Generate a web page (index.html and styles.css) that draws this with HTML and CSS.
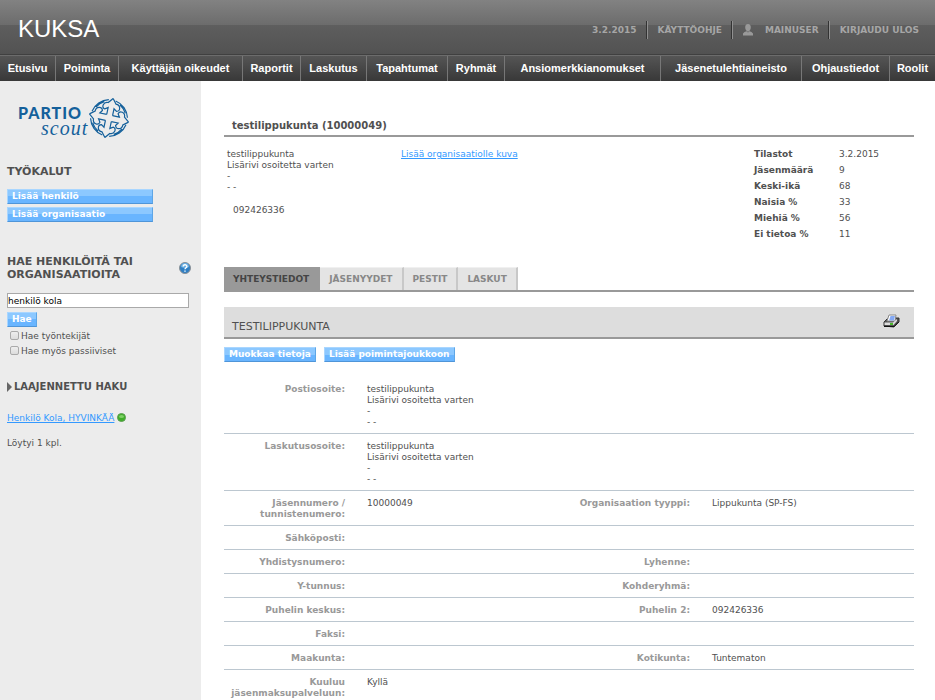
FILE: index.html
```
<!DOCTYPE html>
<html lang="fi">
<head>
    <meta charset="UTF-8">
    <title>KUKSA</title>
    <link rel="stylesheet" href="styles.css">
</head>
<body>
<header class="header">
    <div class="brand">KUKSA</div>
    <ul class="user-menu">
        <li>3.2.2015</li>
        <li><a href="#">KÄYTTÖOHJE</a></li>
        <li>
            <svg class="user-icon" width="10" height="12" viewBox="0 0 10 12">
                <path d="M5 0C3 0 2.200 1.400 2.200 3.200C2.200 5 3 6.200 3.600 6.800V7.500H6.400V6.800C7 6.200 7.800 5 7.800 3.200C7.800 1.400 7 0 5 0Z" fill="#999"/>
                <path d="M0 11.500V9.500L1.500 8L3.500 7.200L5 8.500L6.500 7.200L8.500 8L10 9.500V11.500Z" fill="#999"/>
            </svg>
            <a href="#">MAINUSER</a>
        </li>
        <li><a href="#">KIRJAUDU ULOS</a></li>
    </ul>
</header>

<nav class="nav">
    <a href="#">Etusivu</a>
    <a href="#">Poiminta</a>
    <a href="#">Käyttäjän oikeudet</a>
    <a href="#">Raportit</a>
    <a href="#">Laskutus</a>
    <a href="#">Tapahtumat</a>
    <a href="#">Ryhmät</a>
    <a href="#">Ansiomerkkianomukset</a>
    <a href="#">Jäsenetulehtiaineisto</a>
    <a href="#">Ohjaustiedot</a>
    <a href="#">Roolit</a>
</nav>

<div class="page">
    <aside class="sidebar">
        <svg class="logo" width="112" height="44" viewBox="0 0 112 44">
            <text class="logo-partio" x="0" y="22">PARTIO</text>
            <text class="logo-scout" x="23" y="38">scout</text>
            <g transform="translate(91 21) rotate(12)" fill="none" stroke="#14609b" stroke-width="1.200">
                <g id="arm">
                    <path d="M0 -20L-4 -15C-9 -15 -10 -9 -6 -8L-3 -10L-3 -3M0 -20L4 -15C9 -15 10 -9 6 -8L3 -10L3 -3"/>
                    <path d="M3 -18A19 19 0 0 1 18 -4M8 -15A17 17 0 0 1 15 -8"/>
                </g>
                <use href="#arm" transform="rotate(90)"/>
                <use href="#arm" transform="rotate(180)"/>
                <use href="#arm" transform="rotate(270)"/>
            </g>
        </svg>

        <h2 class="side-title">TYÖKALUT</h2>
        <div class="tools">
            <button class="btn">Lisää henkilö</button>
            <button class="btn">Lisää organisaatio</button>
        </div>

        <form class="search">
            <div class="search-head">
                <h2 class="side-title"><label for="search">HAE HENKILÖITÄ TAI ORGANISAATIOITA</label></h2>
                <svg width="12" height="12" viewBox="0 0 12 12">
                    <circle cx="6" cy="6" r="5.500" fill="#2f7fc4" stroke="#8a9096"/>
                    <path d="M2 5A4 4 0 0 1 10 5Q6 7 2 5Z" fill="#6bb0e4"/>
                    <path d="M4.200 4.600C4.200 2.200 7.900 2.300 7.900 4.400C7.900 5.800 6 5.800 6 7.300M6 8.400V9.700" fill="none" stroke="#fff" stroke-width="1.400"/>
                </svg>
            </div>
            <input class="search-input" id="search" type="text" value="henkilö kola">
            <button class="btn" type="button">Hae</button>
            <label class="check"><input type="checkbox">Hae työntekijät</label>
            <label class="check"><input type="checkbox">Hae myös passiiviset</label>
        </form>

        <h3 class="advanced">
            <svg width="5" height="10" viewBox="0 0 5 10"><path d="M0 0L5 5L0 10Z" fill="#666"/></svg>
            LAAJENNETTU HAKU
        </h3>
        <p class="result">
            <a class="link" href="#">Henkilö Kola, HYVINKÄÄ</a>
            <svg width="9" height="9" viewBox="0 0 9 9">
                <circle cx="4.500" cy="4.500" r="4" fill="#3fae29" stroke="#5c9c50"/>
                <ellipse cx="4.500" cy="3.500" rx="2.500" ry="1.500" fill="#7fd066"/>
            </svg>
        </p>
        <p class="count">Löytyi 1 kpl.</p>
    </aside>

    <main class="main">
        <h1 class="title">testilippukunta (10000049)</h1>

        <section class="summary">
            <div class="address">
                testilippukunta<br>
                Lisärivi osoitetta varten<br>
                -<br>
                - -
                <p class="phone">092426336</p>
            </div>
            <div class="picture"><a class="link" href="#">Lisää organisaatiolle kuva</a></div>
            <table class="stats">
                <tr><th>Tilastot</th><td>3.2.2015</td></tr>
                <tr><th>Jäsenmäärä</th><td>9</td></tr>
                <tr><th>Keski-ikä</th><td>68</td></tr>
                <tr><th>Naisia %</th><td>33</td></tr>
                <tr><th>Miehiä %</th><td>56</td></tr>
                <tr><th>Ei tietoa %</th><td>11</td></tr>
            </table>
        </section>

        <div class="tabs">
            <a class="tab active" href="#">YHTEYSTIEDOT</a>
            <a class="tab" href="#">JÄSENYYDET</a>
            <a class="tab" href="#">PESTIT</a>
            <a class="tab" href="#">LASKUT</a>
        </div>

        <div class="section-head">
            <h2>TESTILIPPUKUNTA</h2>
            <svg width="17" height="15" viewBox="0 0 17 15">
                <path d="M1 8L4 5L12 4L16 4V8L11 13L1 12Z" fill="#555" stroke="#333"/>
                <path d="M4 7L6 1H13L12 7Z" fill="#fff" stroke="#888"/>
                <path d="M6 6.500L7.500 2H12L11 6.500Z" fill="#84a9f3"/>
                <path d="M1.500 8.500H10L14 5V7L10.500 11H1.500Z" fill="#ddd"/>
                <path d="M7 9H10V11H7Z" fill="#4cb82e"/>
                <path d="M1 12.500H11L15.500 8" fill="none" stroke="#111"/>
            </svg>
        </div>

        <div class="actions">
            <button class="btn">Muokkaa tietoja</button>
            <button class="btn">Lisää poimintajoukkoon</button>
        </div>

        <table class="details">
            <colgroup>
                <col class="col-label"><col class="col-value"><col class="col-label"><col class="col-value">
            </colgroup>
            <tr>
                <th>Postiosoite:</th>
                <td colspan="3">testilippukunta<br>Lisärivi osoitetta varten<br>-<br>- -</td>
            </tr>
            <tr>
                <th>Laskutusosoite:</th>
                <td colspan="3">testilippukunta<br>Lisärivi osoitetta varten<br>-<br>- -</td>
            </tr>
            <tr>
                <th>Jäsennumero / tunnistenumero:</th><td>10000049</td>
                <th>Organisaation tyyppi:</th><td>Lippukunta (SP-FS)</td>
            </tr>
            <tr><th>Sähköposti:</th><td colspan="3"></td></tr>
            <tr><th>Yhdistysnumero:</th><td></td><th>Lyhenne:</th><td></td></tr>
            <tr><th>Y-tunnus:</th><td></td><th>Kohderyhmä:</th><td></td></tr>
            <tr><th>Puhelin keskus:</th><td></td><th>Puhelin 2:</th><td>092426336</td></tr>
            <tr><th>Faksi:</th><td colspan="3"></td></tr>
            <tr><th>Maakunta:</th><td></td><th>Kotikunta:</th><td>Tuntematon</td></tr>
            <tr><th>Kuuluu jäsenmaksupalveluun:</th><td colspan="3">Kyllä</td></tr>
        </table>
    </main>
</div>
</body>
</html>
```
FILE: styles.css
```
* {
    box-sizing: border-box;
}

body {
    display: flex;
    flex-direction: column;
    height: 100vh;
    margin: 0;
    overflow: hidden;
    font: 9px/11px Verdana, "DejaVu Sans", sans-serif;
    color: #505050;
    background-color: #fff;
}

h1, h2, h3, p, ul {
    margin: 0;
    padding: 0;
}

/* header */
.header {
    flex: none;
    display: flex;
    justify-content: space-between;
    height: 55px;
    padding: 0 16px 0 18px;
    border-bottom: 1px solid #404040;
    background: linear-gradient(#828282, #6c6c6c 25px, #5e5e5e 25px, #525252);
}

.brand {
    padding-top: 15px;
    font: 24px/28px Arial, "Liberation Sans", sans-serif;
    color: #fff;
}

.user-menu {
    display: flex;
    padding-top: 21px;
    list-style: none;
    font-weight: bold;
    line-height: 18px;
    color: #a6a6a6;
}

.user-menu li {
    display: flex;
    align-items: center;
    height: 18px;
    padding: 0 10px;
    border-left: 1px solid #909090;
    box-shadow: -1px 0 #333;
}

.user-menu li:first-child {
    border: none;
    box-shadow: none;
}

.user-menu li:last-child {
    padding-right: 0;
}

.user-menu a {
    color: inherit;
    text-decoration: none;
}

.user-icon {
    margin-right: 12px;
}

.nav {
    flex: none;
    display: grid;
    grid-template-columns: 55fr 63fr 124fr 58fr 66fr 81fr 57fr 156fr 141fr 88fr 46fr;
    height: 26px;
    border-top: 1px solid #6c6c6c;
    background: linear-gradient(#555, #383838);
}

.nav a {
    border-left: 1px solid #777;
    font: bold 11px/25px Arial, "Liberation Sans", sans-serif;
    text-align: center;
    white-space: nowrap;
    color: #fff;
    text-decoration: none;
}

.nav a:first-child {
    border-left: none;
}

.page {
    flex: 1;
    display: flex;
    min-height: 0;
}

/* sidebar */
.sidebar {
    flex: none;
    width: 201px;
    padding: 16px 10px 0 7px;
    background-color: #ececec;
}

.logo {
    display: block;
    margin: 0 0 24px 11px;
}

.logo-partio {
    font: 900 16px Lato, sans-serif;
    letter-spacing: 1px;
    fill: #14609b;
}

.logo-scout {
    font: italic 20px "Liberation Serif", serif;
    letter-spacing: 1px;
    fill: #14609b;
}

.side-title {
    font-size: 11px;
    line-height: 13px;
}

.btn {
    height: 15px;
    padding: 0 4px;
    border: 1px solid;
    border-color: #a9d6ff #5ea6e6 #4f95d8 #a9d6ff;
    background: linear-gradient(#8cc8ff 50%, #69b5ff 50%);
    font: bold 9px/13px Verdana, "DejaVu Sans", sans-serif;
    color: #fff;
    text-align: left;
    white-space: nowrap;
    cursor: pointer;
}

.tools {
    display: flex;
    flex-direction: column;
    gap: 3px;
    width: 146px;
    margin: 11px 0 33px;
}

.search-head {
    display: flex;
    align-items: center;
    justify-content: space-between;
    margin-bottom: 12px;
}

.search-head .side-title {
    width: 150px;
}

.search-input {
    display: block;
    width: 182px;
    height: 15px;
    margin-bottom: 4px;
    padding: 0;
    border: 1px solid #a9a9a9;
    border-radius: 0;
    background-color: #fff;
    font: 9px/13px Verdana, "DejaVu Sans", sans-serif;
    color: #000;
}

.search .btn {
    display: block;
    margin-bottom: 2px;
}

.check {
    display: flex;
    align-items: center;
    gap: 2px;
    height: 15px;
    padding-left: 3px;
}

.check input {
    appearance: none;
    width: 9px;
    height: 9px;
    margin: 0 0 2px;
    border: 1px solid #aaa;
    border-radius: 2px;
    background: linear-gradient(#eee, #ddd);
}

.advanced {
    display: flex;
    align-items: center;
    gap: 2px;
    margin: 21px 0 20px;
    font-size: 10px;
    line-height: 13px;
}

.link {
    color: #3399ff;
}

.result {
    display: flex;
    gap: 3px;
    margin-bottom: 14px;
}

/* main */
.main {
    flex: 1;
    min-width: 0;
    padding: 37px 21px 0 23px;
}

.title {
    padding: 0 8px 2px;
    border-bottom: 2px solid #999;
    font-size: 10px;
    line-height: 15px;
}

.summary {
    display: flex;
    height: 130px;
    padding-top: 9px;
}

.address {
    width: 177px;
    padding: 3px 3px 0;
}

.phone {
    padding: 12px 6px 0;
}

.picture {
    flex: 1;
    padding-top: 3px;
}

.stats {
    width: 160px;
    height: 96px;
    border-spacing: 0;
}

.stats th {
    width: 85px;
    height: 16px;
    padding: 0;
    text-align: left;
}

.stats td {
    padding: 0;
}

.tabs {
    display: flex;
    border-bottom: 2px solid #999;
}

.tab {
    height: 23px;
    padding: 0 9px;
    border-top: 1px solid #f0f0f0;
    border-right: 2px solid #c8c8c8;
    background-color: #e4e4e4;
    font-weight: bold;
    line-height: 22px;
    color: #888;
    text-decoration: none;
}

.tab.active {
    border-color: #999;
    background-color: #999;
    color: #444;
}

.section-head {
    display: flex;
    justify-content: space-between;
    height: 32px;
    margin-top: 15px;
    padding: 7px 14px 0 8px;
    border-bottom: 2px solid #999;
    background-color: #ddd;
}

.section-head h2 {
    padding-top: 6px;
    font-size: 11px;
    font-weight: normal;
    line-height: 13px;
}

.actions {
    display: flex;
    gap: 8px;
    margin: 8px 0 15px;
}

.details {
    width: 100%;
    table-layout: fixed;
    border-collapse: separate;
    border-spacing: 0;
}

.col-label {
    width: 121px;
}

.details th, .details td {
    height: 24px;
    padding: 7px 0 5px;
    border-bottom: 1px solid #bcc7d0;
    vertical-align: top;
}

.details th {
    text-align: right;
    color: #999;
}

.details td {
    padding-left: 22px;
}
```
